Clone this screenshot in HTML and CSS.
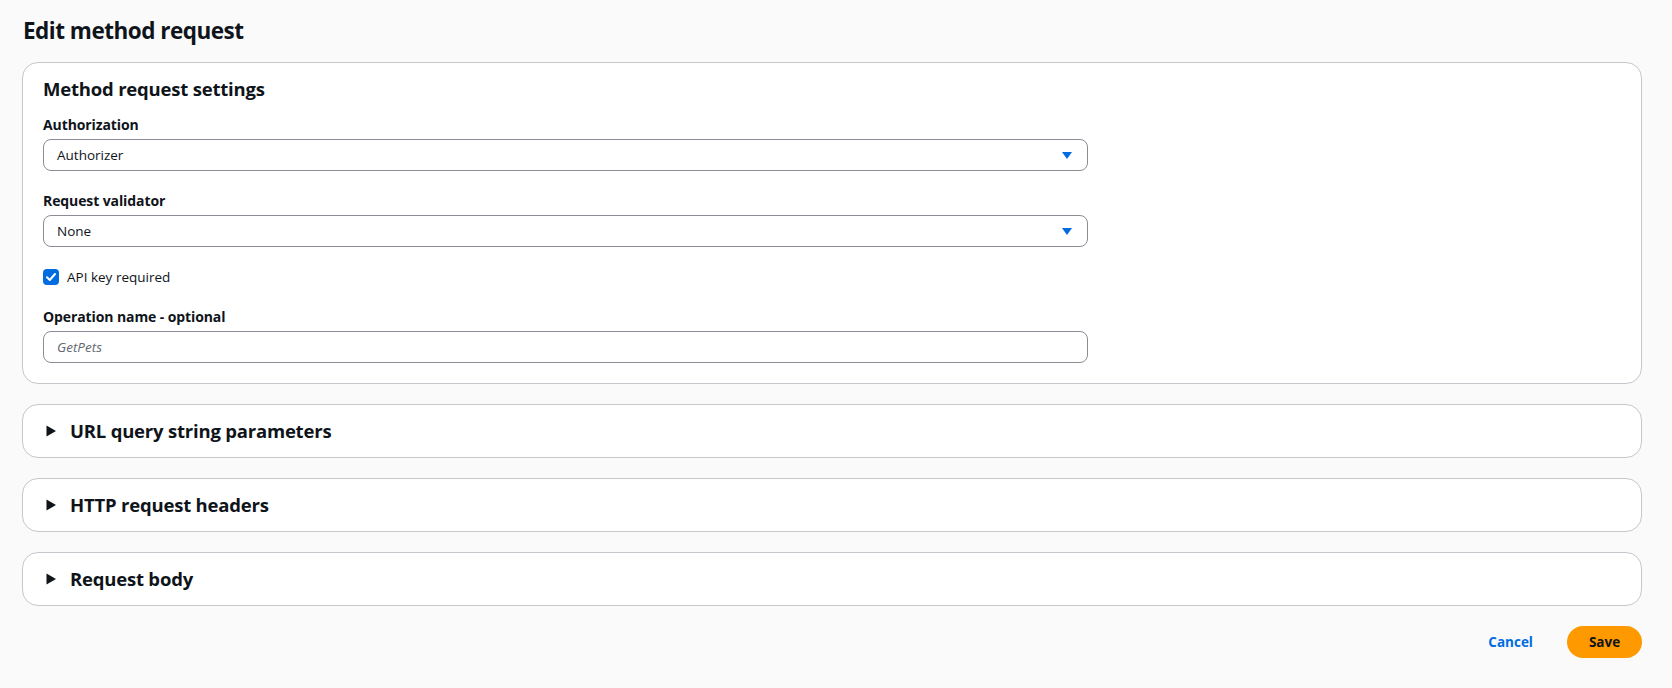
FILE: index.html
```html
<!DOCTYPE html>
<html lang="en">
<head>
<meta charset="utf-8">
<title>Edit method request</title>
<link rel="stylesheet" href="styles.css">
</head>
<body>
<div class="page">
  <h1 class="page-title">Edit method request</h1>
  <section class="card settings">
    <h2 class="card-title">Method request settings</h2>
    <div class="field">
      <div class="label">Authorization</div>
      <div class="select"><span class="value">Authorizer</span>
        <svg class="caret" width="10" height="7" viewBox="0 0 10 7"><path d="M0 0 H10 L5 7 Z" fill="#006ce0"/></svg>
      </div>
    </div>
    <div class="field">
      <div class="label">Request validator</div>
      <div class="select"><span class="value">None</span>
        <svg class="caret" width="10" height="7" viewBox="0 0 10 7"><path d="M0 0 H10 L5 7 Z" fill="#006ce0"/></svg>
      </div>
    </div>
    <label class="check">
      <span class="box"><svg width="16" height="16" viewBox="0 0 16 16"><path d="M4 8.2 L6.8 11 L12 5" fill="none" stroke="#fff" stroke-width="2" stroke-linecap="round" stroke-linejoin="round"/></svg></span>
      <span class="check-text">API key required</span>
    </label>
    <div class="field">
      <div class="label">Operation name - optional</div>
      <div class="input"><span class="placeholder">GetPets</span></div>
    </div>
  </section>
  <section class="card expand">
    <svg class="tri" width="10" height="12" viewBox="0 0 10 12"><path d="M0.5 0.5 L10 6 L0.5 11.5 Z" fill="#0f141a"/></svg>
    <h2 class="expand-title">URL query string parameters</h2>
  </section>
  <section class="card expand">
    <svg class="tri" width="10" height="12" viewBox="0 0 10 12"><path d="M0.5 0.5 L10 6 L0.5 11.5 Z" fill="#0f141a"/></svg>
    <h2 class="expand-title">HTTP request headers</h2>
  </section>
  <section class="card expand">
    <svg class="tri" width="10" height="12" viewBox="0 0 10 12"><path d="M0.5 0.5 L10 6 L0.5 11.5 Z" fill="#0f141a"/></svg>
    <h2 class="expand-title">Request body</h2>
  </section>
  <div class="actions">
    <a class="cancel">Cancel</a>
    <button class="save">Save</button>
  </div>
</div>
</body>
</html>
```

FILE: styles.css
```css
* { box-sizing: border-box; }
html, body { margin: 0; padding: 0; }
body {
  background: #fafafa;
  font-family: "Open Sans", "Noto Sans", Arial, sans-serif;
  color: #0f141a;
}
.page {
  padding: 15px 30px 0 22px;
  display: flex;
  flex-direction: column;
  gap: 20px;
}
.page-title {
  margin: 0 0 -5px 1px;
  font-size: 22.5px;
  line-height: 32px;
  font-weight: 700;
  letter-spacing: -0.5px;
}
.card {
  background: #fff;
  border: 1px solid #c6c6cd;
  border-radius: 16px;
}
.settings {
  padding: 12px 20px 20px 20px;
  display: flex;
  flex-direction: column;
}
.card-title {
  margin: 0 0 13px 0;
  font-size: 18.5px;
  line-height: 28px;
  font-weight: 700;
  letter-spacing: -0.2px;
}
.field { display: flex; flex-direction: column; margin-bottom: 21px; }
.field:last-child { margin-bottom: 0; }
.label {
  font-size: 14px;
  font-weight: 700;
  line-height: 18px;
  margin-bottom: 5px;
  letter-spacing: -0.1px;
}
.select, .input {
  width: 1045px;
  height: 32px;
  border: 1px solid #8c8c94;
  border-radius: 8px;
  background: #fff;
  display: flex;
  align-items: center;
  padding: 0 15px 0 13px;
  font-size: 13.5px;
}
.select { justify-content: space-between; }
.placeholder { font-style: italic; color: #656871; }
.check {
  display: flex;
  align-items: center;
  gap: 8px;
  font-size: 13.5px;
  margin: 0 0 22px 0;
  height: 18px;
}
.box {
  width: 16px; height: 16px;
  border-radius: 4px;
  background: #006ce0;
  display: flex;
}
.expand {
  height: 54px;
  display: flex;
  align-items: center;
  padding-left: 23px;
  gap: 14px;
}
.tri { flex: none; }
.expand-title {
  margin: 0;
  font-size: 18.5px;
  font-weight: 700;
  line-height: 24px;
  letter-spacing: -0.2px;
}
.actions {
  display: flex;
  justify-content: flex-end;
  align-items: center;
  gap: 34px;
}
.cancel {
  color: #006ce0;
  font-weight: 700;
  font-size: 13.5px;
}
.save {
  background: #ff9900;
  border: none;
  border-radius: 20px;
  width: 75px;
  height: 32px;
  font-family: inherit;
  font-weight: 700;
  font-size: 13.5px;
  color: #0f141a;
}
```
